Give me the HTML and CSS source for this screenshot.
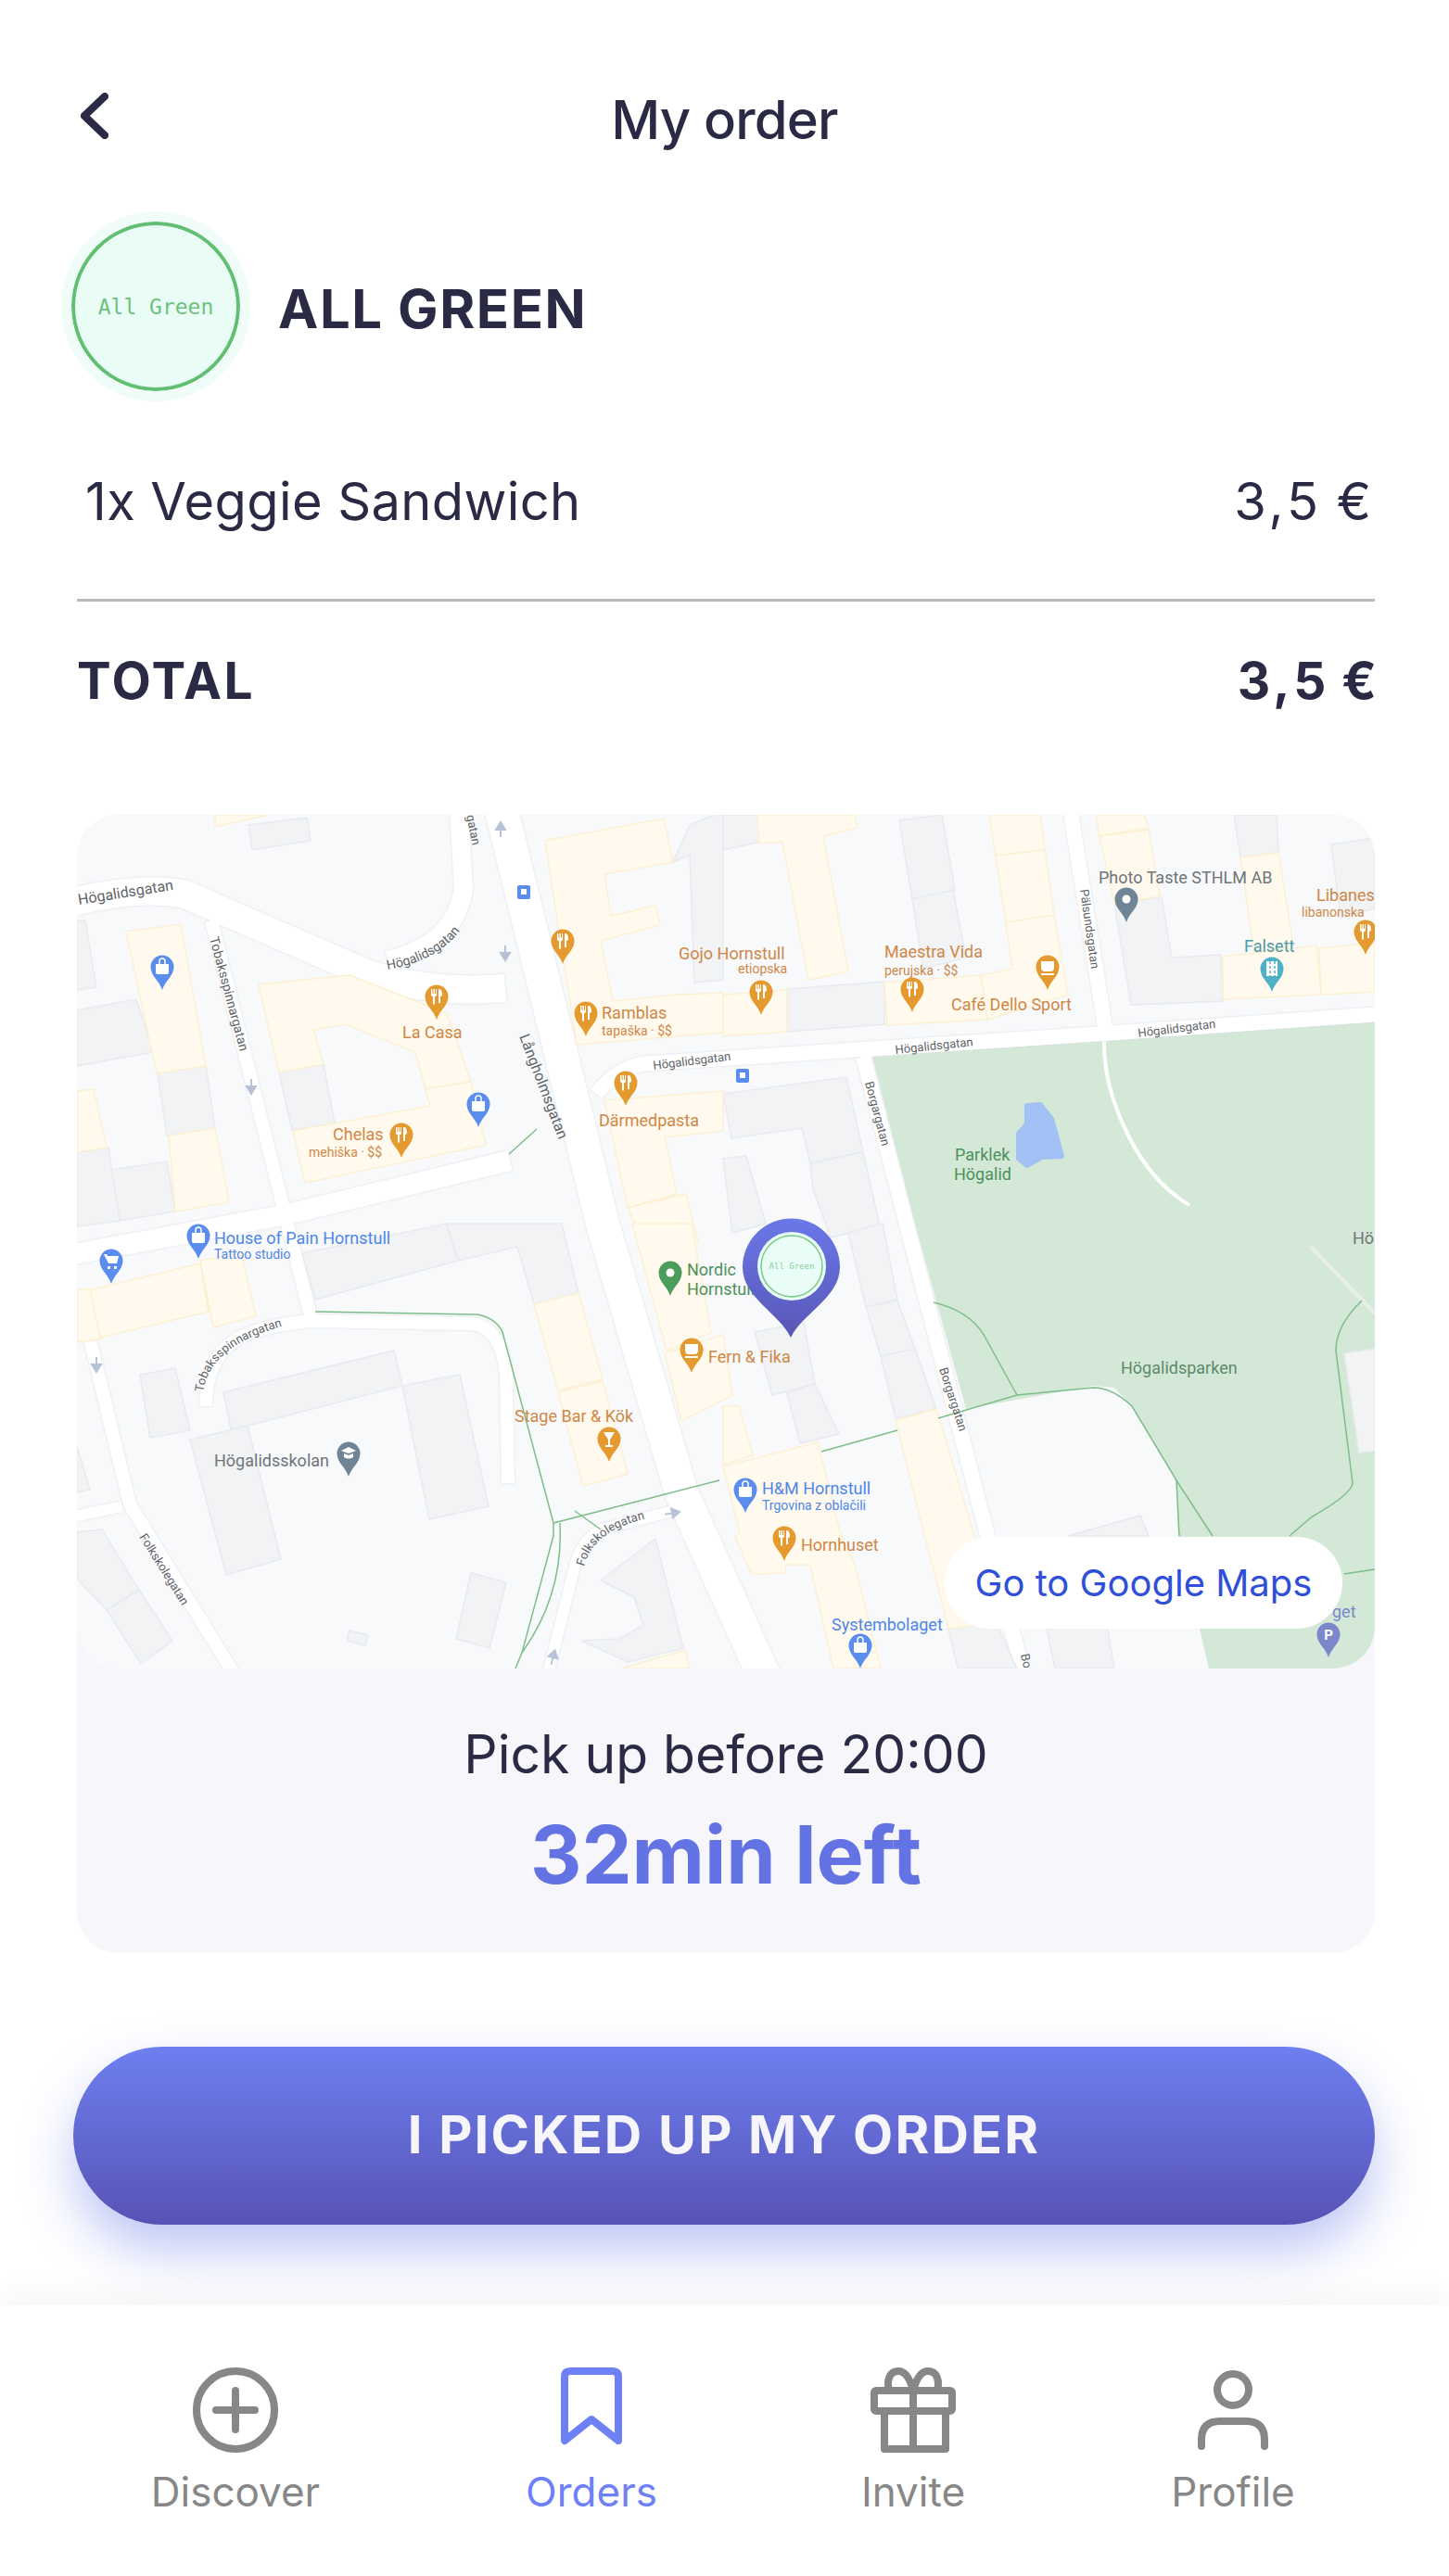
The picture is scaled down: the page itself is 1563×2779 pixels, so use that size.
FILE: index.html
```html
<!DOCTYPE html>
<html lang="en">

<head>
    <meta charset="UTF-8">
    <title>My order</title>
    <link rel="stylesheet" href="styles.css">
</head>

<body>
    <div class="page">
        <!-- Top bar -->
        <div class="topbar">
            <svg class="back" viewBox="0 0 30 50"><polyline points="26,4 4,25 26,46"/></svg>
            <h1>My order</h1>
        </div>

        <!-- Restaurant -->
        <div class="restaurant">
            <div class="logo"><span>All Green</span></div>
            <h2>ALL GREEN</h2>
        </div>

        <!-- Order lines -->
        <div class="line-item">
            <span>1x Veggie Sandwich</span>
            <span class="price">3,5 €</span>
        </div>
        <div class="total">
            <span>TOTAL</span>
            <span class="price">3,5 €</span>
        </div>

        <!-- Map + pickup -->
        <div class="pickup">
            <div class="map">
                <svg class="map-svg" viewBox="83 879 1400 921">
                    <defs>
                        <path id="pin" d="M0 0C-3-10-12.5-15-12.5-25A12.5 12.5 0 1 1 12.5-25C12.5-15 3-10 0 0Z"/>
                        <g id="p-food"><use href="#pin"/><path class="gl" d="M-6-33h1.5v5h1v-5h1.5v5h1v-5H0v7l-2 1.500v8h-2v-8l-2-1.500ZM3-33c2 0 3 3 3 7l-2 1v7H2v-15Z"/></g>
                        <g id="p-shop"><use href="#pin"/><path class="gl" d="M-7-28h14v9q0 2-2 2h-10q-2 0-2-2Z"/><path class="gl-line" d="M-3-28v-3a3 3 0 0 1 6 0v3"/></g>
                        <g id="p-cart"><use href="#pin"/><path class="gl" d="M-8-32h3l1 2h12l-2 8h-9ZM-4-19h3v3h-3ZM3-19h3v3H3Z"/></g>
                        <g id="p-cup"><use href="#pin"/><path class="gl" d="M-7-31H7v7a4 4 0 0 1-4 4h-6a4 4 0 0 1-4-4ZM-7-18H7v2H-7Z"/></g>
                        <g id="p-bar"><use href="#pin"/><path class="gl" d="M-6-32H6L1-24v6h3v2h-8v-2h3v-6Z"/></g>
                        <g id="p-dot"><use href="#pin"/><circle class="gl" cx="0" cy="-25" r="4.500"/></g>
                        <g id="p-school"><use href="#pin"/><path class="gl" d="M-8-28l8-4 8 4-8 3ZM-5-25l5 2 5-2v4q-5 3-10 0Z"/></g>
                        <g id="p-store"><use href="#pin"/><path class="gl" d="M-6-33H6v16H-6Z"/><path class="st-dash" d="M-2-33v16M3-33v16"/></g>
                        <g id="bus"><rect width="14" height="15" rx="2" class="m-bus"/><rect x="4" y="4" width="6" height="6" class="gl"/></g>
                        <path id="arrow" d="M0 10V-2M-5 2L0-6 5 2Z"/>
                        <path id="c1" d="M418 1046Q490 1034 512 976"/>
                        <path id="c2" d="M219 1502Q226 1448 320 1427"/>
                        <path id="c3" d="M630 1690Q640 1648 708 1636"/>
                        <linearGradient id="pin-grad" x1="0" y1="0" x2="0" y2="1">
                            <stop offset="0" stop-color="#6b78e8"/>
                            <stop offset="1" stop-color="#5856b6"/>
                        </linearGradient>
                    </defs>

                    <rect class="m-base" x="83" y="879" width="1400" height="921"/>

                    <!-- park -->
                    <path class="m-park" d="M941 1140L1191 1122L1483 1102V1800H1304L1271 1657L1269 1597L1221 1517L1202 1497L1179 1495L1042 1520L987 1320Z"/>
                    <path class="m-water" d="M1108 1193L1122 1192L1134 1207L1145 1247L1124 1248L1108 1257L1099 1250L1099 1223L1108 1213Z"/>
                    <path class="m-path" d="M1191 1122Q1190 1170 1216 1223T1283 1300"/>
                    <path class="m-path-dim" d="M1414 1345L1483 1417"/>
                    <path class="m-b" d="M1450 1460L1483 1455V1565L1466 1567Z"/>

                    <!-- roads -->
                    <g class="m-roads">
                        <path class="r36" d="M540 870L650 1320L735 1610L825 1810"/>
                        <path class="r30" d="M75 974Q150 955 200 965L400 1052Q470 1072 545 1066"/>
                        <path class="r20" d="M418 1036Q490 1020 500 960L495 870"/>
                        <path class="r14" d="M228 993L335 1420"/>
                        <path class="r22" d="M75 1354L310 1310L550 1252"/>
                        <path class="r16" d="M643 1180Q670 1147 703 1147L1191 1115L1490 1094"/>
                        <path class="r16" d="M1154 870L1193 1115"/>
                        <path class="r16" d="M931 1140L1105 1810"/>
                        <path class="r14" d="M222 1517Q222 1455 270 1438Q300 1428 335 1425L510 1428Q540 1432 546 1480L548 1600"/>
                        <path class="r14" d="M97 1445L140 1623L255 1810"/>
                        <path class="r12" d="M75 1637L132 1625"/>
                        <path class="r12" d="M726 1630L648 1650Q625 1665 620 1690L590 1810"/>
                        <path class="r14" d="M590 1090L640 1250"/>
                    </g>

                    <!-- blocks -->
                    <g class="m-b">
                        <polygon points="170,1158 222,1150 232,1217 180,1225"/>
                        <polygon points="120,1262 180,1253 189,1307 129,1317"/>
                        <polygon points="83,1090 147,1078 166,1135 99,1147 83,1150"/>
                        <polygon points="83,993 92,993 104,1065 83,1068"/>
                        <polygon points="83,1243 117,1238 129,1317 83,1323"/>
                        <polygon points="301,1157 349,1148 361,1212 315,1219"/>
                        <polygon points="268,890 331,882 335,907 272,917"/>
                        <polygon points="726,930 744,922 749,1060 780,1057 780,875 744,890"/>
                        <polygon points="780,879 819,879 821,908 780,917"/>
                        <polygon points="970,885 1016,879 1030,960 984,970"/>
                        <polygon points="984,970 1028,960 1042,1033 996,1045"/>
                        <polygon points="849,1067 954,1059 954,1105 849,1113"/>
                        <polygon points="1202,975 1253,968 1264,1033 1317,1030 1319,1080 1220,1084"/>
                        <polygon points="1331,879 1377,879 1379,920 1338,925"/>
                        <polygon points="1436,911 1483,904 1483,980 1446,990"/>
                        <polygon points="780,1180 913,1162 931,1243 874,1255 865,1217 789,1228"/>
                        <polygon points="874,1255 931,1243 949,1322 896,1335 877,1283"/>
                        <polygon points="780,1250 805,1247 826,1320 790,1330"/>
                        <polygon points="915,1330 952,1320 968,1402 934,1410"/>
                        <polygon points="934,1410 968,1403 987,1455 950,1463"/>
                        <polygon points="950,1463 987,1455 1010,1520 966,1530"/>
                        <polygon points="814,1437 867,1427 879,1493 833,1505"/>
                        <polygon points="849,1503 879,1493 905,1547 863,1557"/>
                        <polygon points="326,1352 482,1320 494,1360 340,1402"/>
                        <polygon points="482,1320 606,1320 624,1395 576,1407 558,1345 494,1360"/>
                        <polygon points="151,1483 189,1476 205,1543 162,1551"/>
                        <polygon points="241,1502 425,1457 434,1495 267,1538 249,1542"/>
                        <polygon points="205,1553 267,1538 303,1682 244,1699"/>
                        <polygon points="434,1495 496,1483 527,1625 463,1639"/>
                        <polygon points="508,1697 546,1707 528,1778 492,1768"/>
                        <polygon points="377,1759 397,1764 394,1775 374,1770"/>
                        <polygon points="83,1653 110,1650 150,1715 115,1737 83,1703"/>
                        <polygon points="115,1737 150,1715 186,1770 152,1795"/>
                        <polygon points="83,1560 97,1607 83,1610"/>
                        <polygon points="648,1705 707,1660 737,1778 677,1793 627,1770 668,1768 694,1753 684,1723"/>
                        <polygon points="1023,1757 1074,1750 1097,1800 1033,1800"/>
                        <polygon points="1129,1757 1193,1747 1202,1800 1138,1800"/>
                        <polygon points="1152,1657 1230,1635 1239,1657"/>
                    </g>
                    <g class="m-y">
                        <polygon points="136,1005 195,997 222,1150 169,1158"/>
                        <polygon points="182,1225 232,1217 247,1297 189,1307"/>
                        <polygon points="83,1177 101,1175 115,1238 83,1243"/>
                        <polygon points="279,1062 377,1052 482,1093 508,1167 459,1175 448,1135 372,1105 338,1111 349,1148 301,1157"/>
                        <polygon points="316,1220 464,1193 459,1175 508,1167 524,1235 329,1276"/>
                        <polygon points="232,879 290,879 232,892"/>
                        <polygon points="588,907 716,883 726,930 652,943 659,988 707,977 712,998 648,1015 661,1080 730,1073 780,1071 780,1114 622,1127"/>
                        <polygon points="780,1073 849,1068 849,1113 780,1118"/>
                        <polygon points="817,879 922,879 925,893 888,902 915,1048 872,1057 844,908 819,910"/>
                        <polygon points="1067,879 1122,879 1127,917 1074,923"/>
                        <polygon points="1074,923 1127,917 1137,987 1085,995"/>
                        <polygon points="1085,995 1137,987 1152,1073 1065,1100 1058,1052 1092,1045"/>
                        <polygon points="954,1060 1058,1052 1065,1100 957,1106"/>
                        <polygon points="1182,879 1234,879 1239,893 1186,902"/>
                        <polygon points="1186,902 1239,895 1251,967 1202,975"/>
                        <polygon points="1338,925 1379,920 1395,1020 1353,1028"/>
                        <polygon points="1319,1032 1420,1020 1425,1073 1319,1078"/>
                        <polygon points="1423,1023 1483,1017 1483,1070 1425,1073"/>
                        <polygon points="652,1187 780,1177 780,1220 717,1227 730,1288 677,1303"/>
                        <polygon points="677,1303 740,1288 753,1340 700,1350"/>
                        <polygon points="682,1320 746,1320 767,1438 719,1457"/>
                        <polygon points="717,1460 780,1440 790,1505 735,1533"/>
                        <polygon points="780,1517 797,1517 812,1570 780,1580"/>
                        <polygon points="576,1407 624,1395 650,1488 602,1500"/>
                        <polygon points="602,1502 650,1490 677,1590 629,1603"/>
                        <polygon points="97,1392 216,1363 225,1415 108,1443"/>
                        <polygon points="216,1360 260,1352 276,1420 230,1432"/>
                        <polygon points="83,1392 97,1390 108,1445 83,1448"/>
                        <polygon points="780,1582 882,1556 906,1653 922,1688 950,1800 899,1800 874,1688 848,1688 847,1697 811,1698 793,1658 798,1653"/>
                        <polygon points="966,1532 1010,1520 1051,1657 1075,1750 1023,1757"/>
                        <polygon points="671,1800 739,1780 744,1800"/>
                    </g>

                    <!-- trails -->
                    <g class="m-trails">
                        <path d="M340 1415L515 1418Q535 1422 542 1437L597 1643L776 1597"/>
                        <path d="M886 1566L968 1543"/>
                        <path d="M1012 1530L1097 1505L1179 1497Q1200 1497 1221 1517L1269 1597L1308 1657"/>
                        <path d="M1007 1405Q1050 1415 1065 1447L1097 1505"/>
                        <path d="M1469 1403Q1441 1430 1441 1457L1459 1600Q1458 1612 1414 1637L1391 1657"/>
                        <path d="M1450 1698L1483 1693"/>
                        <path d="M597 1643V1657L563 1783L556 1800"/>
                        <path d="M604 1643Q608 1720 563 1783"/>
                        <path d="M620 1630L648 1650"/>
                        <path d="M579 1218L549 1245"/>
                        <path d="M1269 1597L1272 1657"/>
                    </g>

                    <!-- road arrows -->
                    <g class="m-arrows">
                        <use href="#arrow" x="540" y="893"/>
                        <use href="#arrow" x="545" y="1030" transform="rotate(180 545 1030)"/>
                        <use href="#arrow" x="271" y="1174" transform="rotate(180 271 1174)"/>
                        <use href="#arrow" x="104" y="1474" transform="rotate(180 104 1474)"/>
                        <use href="#arrow" x="727" y="1632" transform="rotate(80 727 1632)"/>
                        <use href="#arrow" x="597" y="1786" transform="rotate(15 597 1786)"/>
                    </g>

                    <!-- road names -->
                    <g class="t-road">
                        <text class="big" x="85" y="976" transform="rotate(-9 85 976)">Högalidsgatan</text>
                        <text class="small" x="503" y="880" transform="rotate(78 503 880)">gatan</text>
                        <text><textPath href="#c1">Högalidsgatan</textPath></text>
                        <text x="226" y="1012" transform="rotate(75 226 1012)">Tobaksspinnargatan</text>
                        <text class="big" x="560" y="1118" transform="rotate(69 560 1118)">Långholmsgatan</text>
                        <text class="small" x="705" y="1154" transform="rotate(-7 705 1154)">Högalidsgatan</text>
                        <text class="small" x="966" y="1137" transform="rotate(-6 966 1137)">Högalidsgatan</text>
                        <text class="small" x="1228" y="1119" transform="rotate(-7 1228 1119)">Högalidsgatan</text>
                        <text class="small" x="1165" y="960" transform="rotate(82 1165 960)">Pälsundsgatan</text>
                        <text class="small" x="933" y="1168" transform="rotate(75 933 1168)">Borgargatan</text>
                        <text class="small" x="1013" y="1477" transform="rotate(72 1013 1477)">Borgargatan</text>
                        <text class="small" x="1101" y="1785" transform="rotate(78 1101 1785)">Bo</text>
                        <text class="small"><textPath href="#c2">Tobaksspinnargatan</textPath></text>
                        <text class="small" x="150" y="1658" transform="rotate(58 150 1658)">Folkskolegatan</text>
                        <text class="small"><textPath href="#c3">Folkskolegatan</textPath></text>
                    </g>

                    <!-- place names -->
                    <g class="t-food">
                        <text x="434" y="1120">La Casa</text>
                        <text x="732" y="1035">Gojo Hornstull</text>
                        <text class="sub" x="796" y="1050">etiopska</text>
                        <text x="954" y="1033">Maestra Vida</text>
                        <text class="sub" x="954" y="1052">perujska · $$</text>
                        <text x="1026" y="1090">Café Dello Sport</text>
                        <text x="1420" y="972">Libanes</text>
                        <text class="sub" x="1404" y="989">libanonska</text>
                        <text x="649" y="1099">Ramblas</text>
                        <text class="sub" x="649" y="1117">tapaška · $$</text>
                        <text x="646" y="1215">Därmedpasta</text>
                        <text x="359" y="1230">Chelas</text>
                        <text class="sub" x="333" y="1248">mehiška · $$</text>
                        <text x="764" y="1470">Fern &amp; Fika</text>
                        <text x="555" y="1534">Stage Bar &amp; Kök</text>
                        <text x="864" y="1673">Hornhuset</text>
                    </g>
                    <g class="t-shop">
                        <text x="231" y="1342">House of Pain Hornstull</text>
                        <text class="sub" x="231" y="1358">Tattoo studio</text>
                        <text x="822" y="1612">H&amp;M Hornstull</text>
                        <text class="sub" x="822" y="1629">Trgovina z oblačili</text>
                        <text x="897" y="1759">Systembolaget</text>
                    </g>
                    <g class="t-grey">
                        <text x="1185" y="953">Photo Taste STHLM AB</text>
                        <text x="231" y="1582">Högalidsskolan</text>
                        <text x="1459" y="1342">Hö</text>
                    </g>
                    <g class="t-park">
                        <text x="1030" y="1252">Parklek</text>
                        <text x="1029" y="1273">Högalid</text>
                        <text class="dim" x="1209" y="1482">Högalidsparken</text>
                        <text x="741" y="1376">Nordic</text>
                        <text x="741" y="1397">Hornstull</text>
                    </g>
                    <text class="t-teal" x="1342" y="1027">Falsett</text>
                    <text class="t-park-p" x="1437" y="1745">get</text>

                    <!-- pins -->
                    <use class="c-food" href="#p-food" x="471" y="1100"/>
                    <use class="c-food" href="#p-food" x="607" y="1040"/>
                    <use class="c-food" href="#p-food" x="632" y="1118"/>
                    <use class="c-food" href="#p-food" x="675" y="1193"/>
                    <use class="c-food" href="#p-food" x="433" y="1249"/>
                    <use class="c-food" href="#p-food" x="821" y="1095"/>
                    <use class="c-food" href="#p-food" x="984" y="1092"/>
                    <use class="c-food" href="#p-food" x="1473" y="1030"/>
                    <use class="c-food" href="#p-food" x="846" y="1684"/>
                    <use class="c-food" href="#p-cup" x="1130" y="1068"/>
                    <use class="c-food" href="#p-cup" x="746" y="1481"/>
                    <use class="c-food" href="#p-bar" x="657" y="1577"/>
                    <use class="c-shop" href="#p-shop" x="175" y="1068"/>
                    <use class="c-shop" href="#p-shop" x="516" y="1216"/>
                    <use class="c-shop" href="#p-shop" x="214" y="1358"/>
                    <use class="c-shop" href="#p-shop" x="804" y="1632"/>
                    <use class="c-shop" href="#p-shop" x="928" y="1800"/>
                    <use class="c-shop" href="#p-cart" x="120" y="1385"/>
                    <use class="c-grey" href="#p-dot" x="1215" y="995"/>
                    <use class="c-grey" href="#p-school" x="376" y="1593"/>
                    <use class="c-green" href="#p-dot" x="723" y="1398"/>
                    <use class="c-teal" href="#p-store" x="1372" y="1070"/>
                    <use class="c-park" href="#pin" x="1433" y="1788"/>
                    <text class="t-p" x="1433" y="1769">P</text>
                    <use href="#bus" x="558" y="955"/>
                    <use href="#bus" x="794" y="1153"/>

                    <!-- restaurant pin -->
                    <path class="main-pin" d="M853 1443C842 1418 801 1400 801 1367A52.500 52.500 0 0 1 906 1367C906 1400 864 1418 853 1443Z"/>
                    <circle class="main-pin-face" cx="854" cy="1366" r="37"/>
                    <circle class="main-pin-ring" cx="854" cy="1366" r="33"/>
                    <text class="main-pin-text" x="854" y="1369">All Green</text>
                </svg>
                <div class="maps-link">Go to Google Maps</div>
            </div>
            <div class="pickup-info">
                <p>Pick up before 20:00</p>
                <strong>32min left</strong>
            </div>
        </div>

        <button class="picked-up">I PICKED UP MY ORDER</button>
    </div>

    <!-- Tab bar -->
    <nav class="tabs">
        <a class="tab">
            <svg viewBox="0 0 92 92"><circle cx="46" cy="46" r="42"/><path d="M46 25V67M25 46H67"/></svg>
            <span>Discover</span>
        </a>
        <a class="tab active">
            <svg viewBox="0 0 66 92"><path d="M4 79V10Q4 4 10 4H56Q62 4 62 10V79L33 56Z"/></svg>
            <span>Orders</span>
        </a>
        <a class="tab">
            <svg viewBox="0 0 92 92"><rect x="4" y="25" width="84" height="22" rx="2"/><path d="M15 47V88H81V47M46 25V88M46 25C42 10 36 4 30 4C21 4 17 13 20 25M46 25C50 10 56 4 62 4C71 4 75 13 72 25"/></svg>
            <span>Invite</span>
        </a>
        <a class="tab">
            <svg viewBox="0 -4 76 92"><ellipse cx="38" cy="20" rx="17" ry="17"/><path d="M4 81V74Q4 54 24 54H52Q72 54 72 74V81"/></svg>
            <span>Profile</span>
        </a>
    </nav>
</body>

</html>
```

FILE: styles.css
```css
* {
    box-sizing: border-box;
}

body {
    margin: 0;
    background: #fff;
    color: #2b2a45;
    font-family: 'Inter', sans-serif;
}

.page {
    padding: 0 80px 0 83px;
}

.topbar {
    height: 228px;
    padding-top: 100px;
    position: relative;
    margin-right: 3px;
}

.back {
    width: 30px;
    height: 50px;
    margin-left: 4px;
    display: block;
    fill: none;
    stroke: #2b2a45;
    stroke-width: 8;
    stroke-linecap: round;
    stroke-linejoin: round;
}

.topbar h1 {
    position: absolute;
    left: 0;
    right: 0;
    top: 94px;
    margin: 0;
    text-align: center;
    font-size: 58px;
    line-height: 70px;
    font-weight: 500;
    letter-spacing: -0.8px;
}

.restaurant {
    display: flex;
    align-items: center;
    gap: 30px;
    margin-left: -17px;
}

.logo {
    width: 204px;
    height: 205px;
    border-radius: 50%;
    background: #e9fdf6;
    border: 11px solid #effcf7;
    box-shadow: inset 0 0 0 4px #62bf71;
    display: flex;
    align-items: center;
    justify-content: center;
    color: #6fc17e;
    font-family: 'DejaVu Sans Mono', monospace;
    font-size: 23px;
}

.restaurant h2 {
    margin: 0;
    padding-top: 5px;
    font-size: 58px;
    line-height: 60px;
    font-weight: 700;
    letter-spacing: 1.6px;
}

.line-item,
.total {
    display: flex;
    justify-content: space-between;
}

.line-item {
    margin-top: 60px;
    padding: 0 0 0 9px;
    height: 156px;
    font-size: 56px;
    line-height: 96px;
    letter-spacing: 0.4px;
    border-bottom: 3px solid #b9b9b9;
}

.price {
    letter-spacing: 4px;
    word-spacing: -4px;
}

.total {
    margin-top: 50px;
    margin-right: -6px;
    font-size: 55px;
    line-height: 70px;
    font-weight: 700;
    letter-spacing: 2.5px;
}

.pickup {
    margin-top: 110px;
    background: #f6f6fb;
    border-radius: 45px;
}

.map {
    position: relative;
    height: 921px;
    border-radius: 45px;
    overflow: hidden;
}

.map-svg {
    display: block;
    width: 100%;
    height: 100%;
}

.m-base { fill: #f7f9fb; }
.m-park { fill: #d4e8d8; }
.m-water { fill: #a3c1f4; stroke: #a3c1f4; stroke-width: 6; stroke-linejoin: round; }
.m-path { fill: none; stroke: #fff; stroke-width: 4; }
.m-path-dim { fill: none; stroke: #e8eee9; stroke-width: 4; }
.m-b, .m-b polygon { fill: #f1f3f4; stroke: #e8eaed; stroke-width: 1.500; }
.m-y polygon { fill: #fffaed; stroke: #fdf0d2; stroke-width: 1.500; }
.m-roads { fill: none; stroke: #fff; filter: drop-shadow(0 0 1px #d9dce1); }
.r36 { stroke-width: 36; }
.r30 { stroke-width: 30; }
.r22 { stroke-width: 22; }
.r20 { stroke-width: 20; }
.r16 { stroke-width: 16; }
.r14 { stroke-width: 14; }
.r12 { stroke-width: 12; }
.m-trails { fill: none; stroke: #7fbd88; stroke-width: 1.500; }
.m-arrows { fill: #b8c2d6; stroke: #b8c2d6; stroke-width: 2; }
.m-bus { fill: #5a8dee; }

.gl { fill: #fff; }
.gl-line { fill: none; stroke: #fff; stroke-width: 1.500; }
.st-dash { stroke: #4fb1c6; stroke-width: 1.500; stroke-dasharray: 3 2; }
.c-food { fill: #e49a2e; }
.c-shop { fill: #5a8dee; }
.c-grey { fill: #6f8596; }
.c-green { fill: #4a9d5b; }
.c-teal { fill: #4fb1c6; }
.c-park { fill: #7b87c9; }

.map-svg text { font-family: 'Roboto', sans-serif; font-size: 18px; }
.map-svg .sub { font-size: 14px; }
.t-road text { fill: #5f6368; font-size: 14px; }
.map-svg .t-road .small { font-size: 13px; }
.map-svg .t-road .big { font-size: 16px; }
.t-food { fill: #cf8747; }
.t-shop { fill: #4f86e8; }
.t-grey { fill: #70757a; }
.t-park { fill: #4d9159; }
.t-park .dim { fill: #5e8a6a; }
.t-teal { fill: #4a9aa8; }
.t-park-p { fill: #7b87c9; }
.map-svg .t-p { fill: #fff; font-size: 15px; font-weight: 700; text-anchor: middle; }

.main-pin { fill: url(#pin-grad); }
.main-pin-face { fill: #e9fdf6; }
.main-pin-ring { fill: none; stroke: #79c98b; stroke-width: 1.500; }
.map-svg .main-pin-text { fill: #86cd96; font-family: 'DejaVu Sans Mono', monospace; font-size: 9px; text-anchor: middle; }

.maps-link {
    position: absolute;
    right: 35px;
    bottom: 43px;
    width: 429px;
    height: 99px;
    border-radius: 50px;
    background: #fff;
    color: #2f4fd8;
    font-size: 40px;
    line-height: 99px;
    text-align: center;
}

.pickup-info {
    height: 307px;
    padding-top: 58px;
    text-align: center;
}

.pickup-info p {
    margin: 0;
    font-size: 57px;
    line-height: 70px;
}

.pickup-info strong {
    display: block;
    margin-top: 23px;
    color: #6473e3;
    font-size: 86px;
    line-height: 100px;
    font-weight: 700;
}

.picked-up {
    display: block;
    width: 1404px;
    height: 192px;
    margin: 101px 0 0 -4px;
    padding-bottom: 4px;
    border: none;
    border-radius: 96px;
    background: linear-gradient(#6e7ff0, #5753b5);
    box-shadow: 0 28px 56px rgba(100, 120, 230, 0.42);
    color: #f5f5fb;
    font-family: 'Inter', sans-serif;
    font-size: 56px;
    font-weight: 700;
    letter-spacing: 2.2px;
}

.tabs {
    display: grid;
    grid-template-columns: 388px 380px 314px 376px;
    height: 292px;
    margin-top: 87px;
    padding: 67px 45px 0 60px;
    background: #fff;
    box-shadow: 0 -14px 24px rgba(120, 120, 130, 0.06);
    position: relative;
}

.tab {
    display: flex;
    flex-direction: column;
    align-items: center;
    color: #878787;
    font-size: 44px;
    line-height: 60px;
}

.tab svg {
    height: 92px;
    margin-bottom: 12px;
    fill: none;
    stroke: #878787;
    stroke-width: 8;
    stroke-linecap: round;
    stroke-linejoin: round;
}

.tab.active {
    color: #6d80f5;
}

.tab.active svg {
    stroke: #6d80f5;
}
```
